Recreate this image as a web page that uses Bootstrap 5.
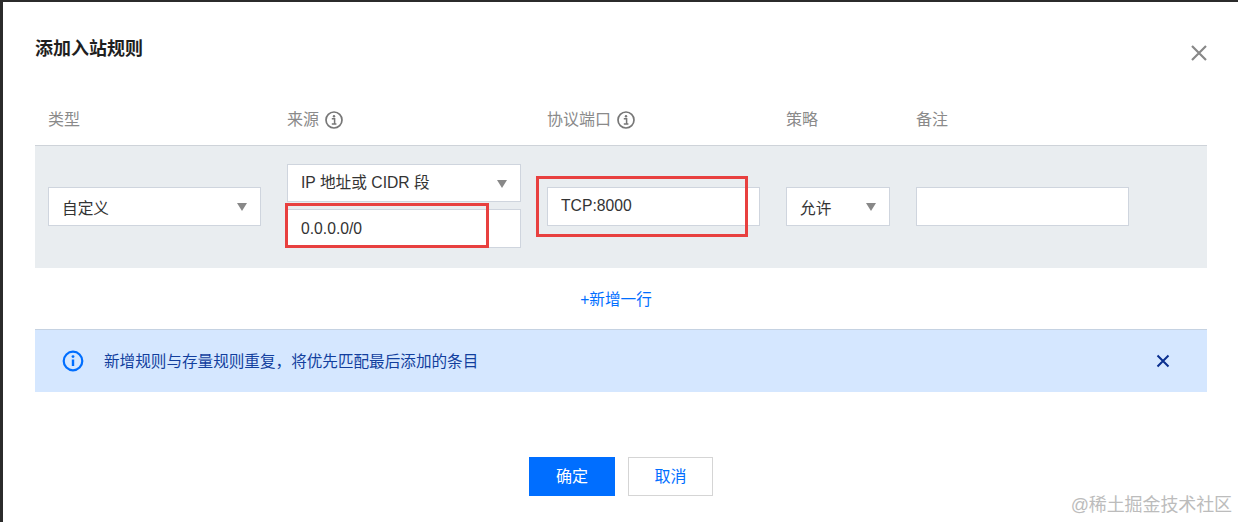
<!DOCTYPE html>
<html lang="zh-CN">
<head>
<meta charset="utf-8">
<title>添加入站规则</title>
<link rel="stylesheet" href="https://cdn.jsdelivr.net/npm/bootstrap@5.3.0/dist/css/bootstrap.min.css">
<style>
html,body{height:522px;overflow:hidden}
body{background:#fff;border-top:2px solid #2b2b2b;border-left:3px solid #2b2b2b;font-family:"Liberation Sans","Noto Sans CJK SC",sans-serif;font-size:16px;color:#333;position:relative}
.dlg{padding:0 31px 0 32px}
.dlg-head{height:90px;padding-top:34px}
.dlg-title{font-size:18px;font-weight:700;line-height:26px;color:#1f1f1f;margin:0}
.dlg-x{width:20px;height:20px;margin:7px -2px 0 0;padding:0;border:0;background:none;line-height:0}
.cols{padding-left:13px}
.c1{width:239px}.c2{width:260px}.c3{width:239px}.c4{width:130px}.c5{width:213px}
.hd{height:54px;border-bottom:1px solid #ced3d9;color:#8a8a8a;padding-top:3px}
.hd svg{margin-left:6px}
.rw{height:122px;background:#e9edf0;padding-bottom:2px}
.fld{display:flex;align-items:center;justify-content:space-between;height:39px;padding:0 13px 0 13px;background:#fff;border:1px solid #cfd5de;border-radius:0;font-size:15.7px;color:#333;line-height:22px}
.fld:focus{border-color:#cfd5de;box-shadow:none}
.fld.w1{width:213px}.fld.w2{width:234px}.fld.w4{width:104px}
.zh-t{margin-top:5px}
.arrow{width:0;height:0;margin-top:2px;border-left:5.5px solid transparent;border-right:5.5px solid transparent;border-top:8px solid #888}
.stack{display:flex;flex-direction:column;gap:7px}
.stack .fld:first-child{height:38px}
.addrow{height:61px;padding:2px 10px 0 0}
.addlink{color:#006eff;text-decoration:none;line-height:22px;font-size:15.6px}
.tip{height:63px;background:#d5e7ff;border-top:1px solid #c5d2e2;padding:0 36px 0 27px;color:#123f9e}
.tip span{margin:2px 0 0 20px;font-size:15.6px}
.foot{margin-top:65px;gap:13px}
.bt{width:86px;height:39px;border-radius:0;font-size:16px;padding:0;line-height:37px}
.bt-ok{background:#006eff;border:1px solid #006eff;color:#fff}
.bt-no{width:85px;background:#fff;border:1px solid #d5d5d5;color:#006eff}
.mk{position:absolute;border:3px solid #e8403f;pointer-events:none}
.mk-a{left:282px;top:201px;width:204px;height:45px}
.mk-b{left:533px;top:174px;width:212px;height:61px}
.wm{position:absolute;right:6px;bottom:5px;font-size:18px;line-height:24px;color:#bcbcbc;white-space:nowrap;letter-spacing:-.1px}
</style>
</head>
<body>
<div class="dlg">
  <div class="dlg-head d-flex justify-content-between align-items-start">
    <h1 class="dlg-title">添加入站规则</h1>
    <button class="dlg-x" type="button" aria-label="关闭">
      <svg width="20" height="20" viewBox="0 0 20 20"><path d="M3 3 17 17M17 3 3 17" stroke="#888" stroke-width="2.2" fill="none"/></svg>
    </button>
  </div>
  <div class="cols hd d-flex align-items-center">
    <div class="c1">类型</div>
    <div class="c2 d-flex align-items-center">来源<svg width="18" height="18" viewBox="0 0 18 18"><circle cx="9" cy="9" r="8" fill="none" stroke="#777" stroke-width="1.7"/><circle cx="9" cy="5.2" r="1.2" fill="#777"/><path d="M6.8 7.8h2.8v4.8M6.8 13.1h4.6" fill="none" stroke="#777" stroke-width="1.5"/></svg></div>
    <div class="c3 d-flex align-items-center">协议端口<svg width="18" height="18" viewBox="0 0 18 18"><circle cx="9" cy="9" r="8" fill="none" stroke="#777" stroke-width="1.7"/><circle cx="9" cy="5.2" r="1.2" fill="#777"/><path d="M6.8 7.8h2.8v4.8M6.8 13.1h4.6" fill="none" stroke="#777" stroke-width="1.5"/></svg></div>
    <div class="c4">策略</div>
    <div class="c5">备注</div>
  </div>
  <div class="cols rw d-flex align-items-center">
    <div class="c1"><div class="fld w1"><span class="zh-t">自定义</span><i class="arrow"></i></div></div>
    <div class="c2 stack">
      <div class="fld w2">IP 地址或 CIDR 段<i class="arrow"></i></div>
      <input class="form-control fld w2" value="0.0.0.0/0" aria-label="来源">
    </div>
    <div class="c3"><input class="form-control fld w1" value="TCP:8000" aria-label="协议端口"></div>
    <div class="c4"><div class="fld w4"><span class="zh-t">允许</span><i class="arrow"></i></div></div>
    <div class="c5"><input class="form-control fld w1" aria-label="备注"></div>
  </div>
  <div class="addrow d-flex align-items-center justify-content-center"><a class="addlink" href="#">+新增一行</a></div>
  <div class="tip d-flex align-items-center justify-content-between">
    <div class="d-flex align-items-center">
      <svg width="22" height="22" viewBox="0 0 22 22"><circle cx="11" cy="11" r="9.3" fill="none" stroke="#006eff" stroke-width="2.2"/><circle cx="11" cy="6.6" r="1.4" fill="#006eff"/><path d="M11 9.5v6.5" stroke="#006eff" stroke-width="2.4"/></svg>
      <span>新增规则与存量规则重复，将优先匹配最后添加的条目</span>
    </div>
    <svg width="16" height="16" viewBox="0 0 16 16"><path d="M2.5 2.5 13.5 13.5M13.5 2.5 2.5 13.5" stroke="#0a2f8f" stroke-width="2" fill="none"/></svg>
  </div>
  <div class="foot d-flex justify-content-center">
    <button class="btn bt bt-ok" type="button">确定</button>
    <button class="btn bt bt-no" type="button">取消</button>
  </div>
</div>
<div class="mk mk-a"></div>
<div class="mk mk-b"></div>
<div class="wm">@稀土掘金技术社区</div>
<script src="https://cdn.jsdelivr.net/npm/bootstrap@5.3.0/dist/js/bootstrap.bundle.min.js"></script>
</body>
</html>
